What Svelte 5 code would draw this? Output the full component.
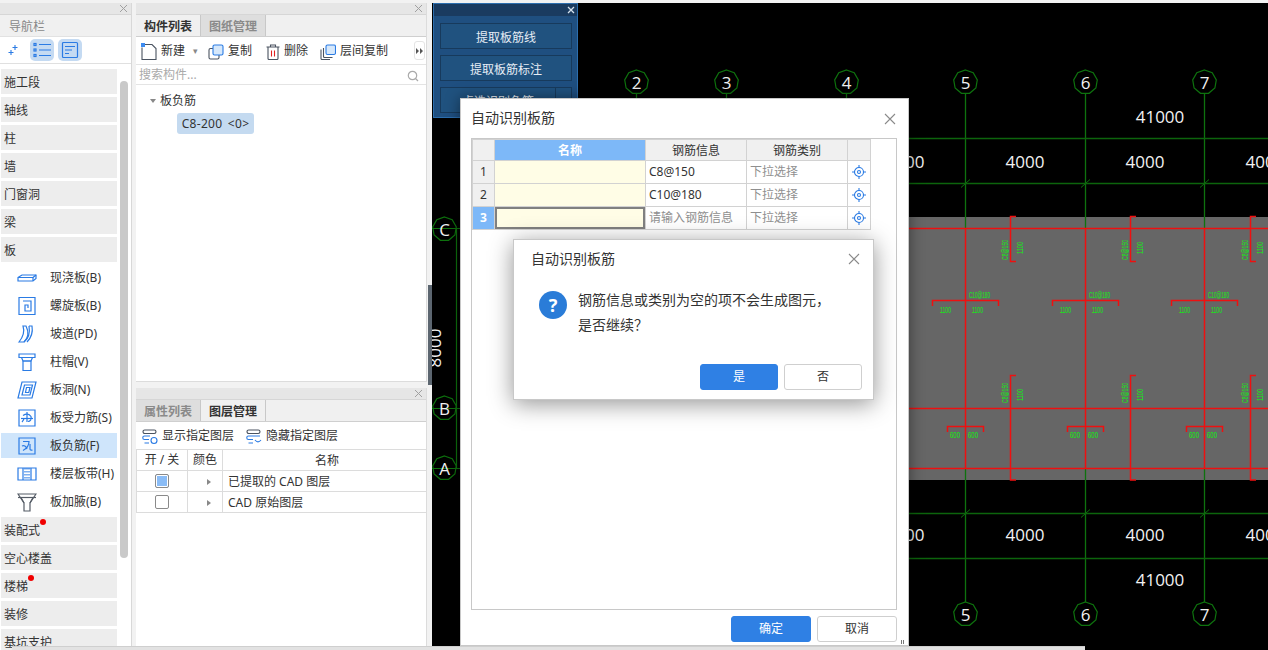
<script>
  const groupsTop = ['施工段', '轴线', '柱', '墙', '门窗洞', '梁', '板'];
  const groupsBottom = [
    { name: '装配式', dot: true },
    { name: '空心楼盖' },
    { name: '楼梯', dot: true },
    { name: '装修' },
    { name: '基坑支护' }
  ];
  const children = [
    { name: '现浇板(B)', paths: ['M1 9.500 5 7h14v3.500l-3 2.500H1z', 'M1 9.500h15v3.500', 'M16 9.500 19 7'] },
    { name: '螺旋板(B)', paths: ['M2 1.500h16v17H2z', 'M6 5h8v10H8v-6h3v3'] },
    { name: '坡道(PD)', paths: ['M2 18C6 13 8 8 6 2h3c3 6 2 12-2 16z', 'M7 18c5-4 6-10 5-16', 'M10 18c4-4 6-10 5-16h-3'] },
    { name: '柱帽(V)', paths: ['M2 2h16v3.500H2z', 'M4.500 5.500 6 9h8l1.500-3.500', 'M6 9h8v9.500H6z'] },
    { name: '板洞(N)', paths: ['M5 2h14l-4 16H1z', 'M7.500 5h8l-2.500 10H5z', 'M9.500 7.500h3.500l-1.200 5H8.500z'] },
    { name: '板受力筋(S)', paths: ['M2 2h16V18H2z', 'M4 10.500h12', 'M6 7.500c3-2 6-2 8 1 1 3-1 5-3 5', 'M10 4v10', 'M7 10c0 2-1 3-2 4'] },
    { name: '板负筋(F)', sel: true, paths: ['M2 2h16v16H2z', 'M6 5.500h6c0 4-2 7-6 9', 'M5 10c2-1 4 0 5 3', 'M13 8v5c0 1 1 1.500 2.500 1'] },
    { name: '楼层板带(H)', paths: ['M1 4h18v12H1z', 'M6 4v12M14 4v12', 'M8 4v12M10 4v12M12 4v12'], dashed: [2] },
    { name: '板加腋(B)', dark: true, paths: ['M1 2h18l-6 9v8H7v-8z', 'M1 5.500h18', 'M7 11 4 5.500M13 11l3-5.500'] }
  ];

  const topX = [636, 726, 846, 965, 1085, 1204];
  const gridX = [965, 1085, 1204];
  const subX = [1010, 1130, 1250];
  const bubbles = [
    { x: 636, y: 82, t: '2' }, { x: 726, y: 82, t: '3' }, { x: 846, y: 82, t: '4' },
    { x: 965, y: 82, t: '5' }, { x: 1085, y: 82, t: '6' }, { x: 1204, y: 82, t: '7' },
    { x: 965, y: 614, t: '5' }, { x: 1085, y: 614, t: '6' }, { x: 1204, y: 614, t: '7' },
    { x: 444, y: 229, t: 'C' }, { x: 444, y: 408, t: 'B' }, { x: 444, y: 468, t: 'A' }
  ];
  function ring(cx, cy, r = 12) {
    const pts = [];
    for (let i = 0; i < 9; i++) {
      const a = (i / 9) * Math.PI * 2 - Math.PI / 2;
      pts.push((cx + Math.cos(a) * r).toFixed(1) + ',' + (cy + Math.sin(a) * r).toFixed(1));
    }
    return pts.join(' ');
  }
  const dims = [
    { x: 905, y: 168, t: '4000' }, { x: 1025, y: 168, t: '4000' }, { x: 1145, y: 168, t: '4000' }, { x: 1265, y: 168, t: '4000' },
    { x: 905, y: 541, t: '4000' }, { x: 1025, y: 541, t: '4000' }, { x: 1145, y: 541, t: '4000' }, { x: 1265, y: 541, t: '4000' },
    { x: 1160, y: 123, t: '41000' }, { x: 1160, y: 586, t: '41000' }
  ];
</script>

<div class="app" lang="zh-CN">
  <aside class="nav">
    <div class="grip">
      <svg class="x" width="9" height="9" viewBox="0 0 9 9" stroke="#a0a0a0"><path d="M1 1 8 8M8 1 1 8" /></svg>
    </div>
    <div class="navtitle">导航栏</div>
    <div class="navtools">
      <svg class="tool" width="18" height="18" viewBox="0 0 18 18" fill="none" stroke="#2a7be4" stroke-width="1.100">
        <path d="M11 4v5M8.500 6.500h5M7 9v5M4.500 11.500h5" />
      </svg>
      <span class="chip">
        <svg width="18" height="18" viewBox="0 0 18 18" fill="none" stroke="#2a7be4" stroke-width="1.200">
          <path d="M6 3.500h12M6 9h12M6 14.500h12" /><rect x="1" y="2.500" width="2" height="2" /><rect x="1" y="8" width="2" height="2" /><rect x="1" y="13.500" width="2" height="2" />
        </svg>
      </span>
      <span class="chip">
        <svg width="18" height="18" viewBox="0 0 18 18" fill="none" stroke="#2a7be4" stroke-width="1.200">
          <rect x="1.500" y="1.500" width="15" height="15" rx="1" /><path d="M4 5.500h10M4 9h7M4 12.500h4" />
        </svg>
      </span>
    </div>
    <div class="navbody">
      <div class="navlist">
        {#each groupsTop as g}
          <div class="group">{g}</div>
        {/each}
        {#each children as c}
          <div class="kid" class:sel={c.sel}>
            <svg width="20" height="20" viewBox="0 0 20 20" fill="none" stroke={c.dark ? '#555c66' : '#2a7be4'} stroke-width="1.200">
              {#each c.paths as d, i}
                <path {d} stroke-dasharray={c.dashed && c.dashed.includes(i) ? '1.500 1.500' : undefined} />
              {/each}
            </svg>
            <span>{c.name}</span>
          </div>
        {/each}
        {#each groupsBottom as g}
          <div class="group"><span class="gname">{g.name}{#if g.dot}<i class="dot"></i>{/if}</span></div>
        {/each}
      </div>
      <div class="thumb"></div>
    </div>
  </aside>

  <div class="mid">
    <section class="panel upper">
      <div class="grip">
        <svg class="x" width="9" height="9" viewBox="0 0 9 9" stroke="#a0a0a0"><path d="M1 1 8 8M8 1 1 8" /></svg>
      </div>
      <div class="tabs">
        <span class="tab on">构件列表</span><span class="tab">图纸管理</span>
      </div>
      <div class="bar">
        <svg width="16" height="18" viewBox="0 0 16 18" fill="none" stroke="#4a5360" stroke-width="1.100">
          <path d="M1 4.500V16.500h14V5.500L11 1.500H4" /><rect x="0" y="0" width="4" height="4" fill="#3d8bf0" stroke="none" />
        </svg>
        <span class="lbl">新建</span><span class="caret">▾</span>
        <svg class="mgl" width="16" height="16" viewBox="0 0 16 16" fill="none" stroke="#4a5360" stroke-width="1.100">
          <rect x="1" y="4.500" width="10" height="10.500" rx="1.500" /><rect x="5" y="1" width="10" height="10" rx="1.500" fill="#d6e8fb" stroke="#2a7be4" />
        </svg>
        <span class="lbl">复制</span>
        <svg class="mgl wider" width="14" height="16" viewBox="0 0 14 16" fill="none" stroke="#4a5360" stroke-width="1.100">
          <path d="M0.500 3h13M4.500 3V1h5v2M2 3v11.500a1 1 0 0 0 1 1h8a1 1 0 0 0 1-1V3" /><path d="M5.500 6.500v6M8.500 6.500v6" stroke="#e02020" />
        </svg>
        <span class="lbl">删除</span>
        <svg class="mgl" width="16" height="16" viewBox="0 0 16 16" fill="none" stroke="#4a5360" stroke-width="1.100">
          <path d="M1 5.500v9a1 1 0 0 0 1 1h8M3.500 4v8.500a1 1 0 0 0 1 1h8" /><rect x="6" y="1" width="9.500" height="9.500" rx="1.500" fill="#d6e8fb" stroke="#2a7be4" />
        </svg>
        <span class="lbl">层间复制</span>
        <span class="more">
          <svg width="7" height="6" viewBox="0 0 7 6" fill="#555"><path d="M0 0 3 3 0 6zM4 0 7 3 4 6z" /></svg>
        </span>
      </div>
      <div class="search">
        <span>搜索构件...</span>
        <svg width="12" height="12" viewBox="0 0 12 12" fill="none" stroke="#aaa" stroke-width="1.200">
          <circle cx="5.500" cy="5.500" r="4.200" /><path d="M8.500 8.500 11 11" />
        </svg>
      </div>
      <div class="tree">
        <div class="node"><span class="down"></span>板负筋</div>
        <div class="leaf">C8-200 &lt;0&gt;</div>
      </div>
    </section>

    <section class="panel lowerp">
      <div class="grip">
        <svg class="x" width="9" height="9" viewBox="0 0 9 9" stroke="#a0a0a0"><path d="M1 1 8 8M8 1 1 8" /></svg>
      </div>
      <div class="tabs">
        <span class="tab">属性列表</span><span class="tab on">图层管理</span>
      </div>
      <div class="bar layerbar">
        <svg width="16" height="16" viewBox="0 0 16 16" fill="none" stroke="#2a7be4" stroke-width="1.100">
          <rect x="1" y="1" width="13" height="3.500" rx="1.700" stroke="#4a5360" /><path d="M8 7H2.500a1.700 1.700 0 0 0 0 3.500H7M7 14H2.500" /><circle cx="12" cy="11.500" r="3" />
        </svg>
        <span class="lbl">显示指定图层</span>
        <svg class="mgl" width="16" height="16" viewBox="0 0 16 16" fill="none" stroke="#2a7be4" stroke-width="1.100">
          <rect x="1" y="1" width="13" height="3.500" rx="1.700" stroke="#4a5360" /><path d="M14 7H2.500a1.700 1.700 0 0 0 0 3.500H7M7 14H2.500M9 11c2 2.500 4 2.500 6 0" />
        </svg>
        <span class="lbl">隐藏指定图层</span>
      </div>
      <table class="layers">
        <thead>
          <tr><th class="c1">开 / 关</th><th class="c2">颜色</th><th>名称</th></tr>
        </thead>
        <tbody>
          <tr>
            <td class="c1"><span class="check on"></span></td>
            <td class="c2"><span class="right"></span></td>
            <td>已提取的 CAD 图层</td>
          </tr>
          <tr>
            <td class="c1"><span class="check"></span></td>
            <td class="c2"><span class="right"></span></td>
            <td>CAD 原始图层</td>
          </tr>
        </tbody>
      </table>
    </section>
  </div>

  <div class="canvas">
    <svg width="836" height="647" viewBox="432 3 836 647">
      <rect x="908" y="217" width="360" height="263" fill="#666" />

      {#each topX as x}
        <line x1={x + 0.5} y1="94" x2={x + 0.5} y2="229" stroke="#0e720e" stroke-width="1.300" />
      {/each}
      {#each gridX as x}
        <line x1={x + 0.5} y1="229" x2={x + 0.5} y2="468" stroke="#ee1010" stroke-width="1.500" />
        <line x1={x + 0.5} y1="468" x2={x + 0.5} y2="602" stroke="#0e720e" stroke-width="1.300" />
        <path d="M{x - 4} 187.500 {x + 5} 179.500M{x - 4} 517.500 {x + 5} 509.500" stroke="#0e720e" />
      {/each}
      <path d="M908 138.500H1268M908 183.500H1268M908 513.500H1268M908 558.500H1268" stroke="#0c640c" stroke-width="1.500" />
      <path d="M908 228.500H1268M908 408.500H1268M908 468.500H1268" stroke="#ee1010" stroke-width="1.500" />
      <path d="M456.500 229V468M432 228.500H460M432 408.500H460M432 468.500H460" stroke="#0e720e" stroke-width="1.200" />

      {#each subX as x}
        <path d="M{x + 6} 216.500H{x + 0.5}V261.500H{x + 6}M{x + 6} 375.500H{x + 0.5}V480H{x + 6}" fill="none" stroke="#ee1010" stroke-width="1.500" />
        <text class="mini" transform="translate({x - 2} 250) rotate(-90)" text-anchor="middle" textLength="20" lengthAdjust="spacingAndGlyphs">C8@150</text>
        <text class="mini" transform="translate({x + 13} 248) rotate(-90)" text-anchor="middle" textLength="12" lengthAdjust="spacingAndGlyphs">1100</text>
        <text class="mini" transform="translate({x - 2} 393) rotate(-90)" text-anchor="middle" textLength="20" lengthAdjust="spacingAndGlyphs">C8@150</text>
        <text class="mini" transform="translate({x + 13} 395) rotate(-90)" text-anchor="middle" textLength="12" lengthAdjust="spacingAndGlyphs">1100</text>
      {/each}

      {#each gridX as x}
        <path d="M{x - 32.500} 306V300.500H{x + 33.500}V306M{x - 17.500} 432V426.500H{x + 18.500}V432" fill="none" stroke="#ee1010" stroke-width="1.500" />
        <text class="mini" x={x + 4} y="298" textLength="21" lengthAdjust="spacingAndGlyphs">C10@180</text>
        <text class="mini" x={x - 25} y="313" textLength="11" lengthAdjust="spacingAndGlyphs">1100</text>
        <text class="mini" x={x + 7} y="313" textLength="11" lengthAdjust="spacingAndGlyphs">1100</text>
        <text class="mini" x={x - 15} y="438" textLength="10" lengthAdjust="spacingAndGlyphs">600</text>
        <text class="mini" x={x + 3} y="438" textLength="10" lengthAdjust="spacingAndGlyphs">600</text>
      {/each}

      {#each bubbles as b}
        <polygon points={ring(b.x + 0.5, b.y)} fill="none" stroke="#0e720e" stroke-width="1.200" />
        <text class="cad" x={b.x + 0.5} y={b.y + 7} text-anchor="middle">{b.t}</text>
      {/each}
      {#each dims as d}
        <text class="cad" x={d.x} y={d.y} text-anchor="middle">{d.t}</text>
      {/each}
      <text class="cad" transform="translate(441 348) rotate(-90)" text-anchor="middle">8000</text>
    </svg>
  </div>

  <div class="handle"></div>

  <div class="float">
    <div class="floathead">
      <svg width="8" height="8" viewBox="0 0 8 8" stroke="#d5e2ef" stroke-width="1.300"><path d="M1 1 7 7M7 1 1 7" /></svg>
    </div>
    <div class="fbtn">提取板筋线</div>
    <div class="fbtn">提取板筋标注</div>
    <div class="fbtn split"><span>点选识别负筋</span><b>▾</b></div>
  </div>

  <div class="dialog main">
    <header>
      <span>自动识别板筋</span>
      <svg width="12" height="12" viewBox="0 0 12 12" stroke="#8a8a8a" stroke-width="1.100"><path d="M1 1 11 11M11 1 1 11" /></svg>
    </header>
    <div class="box">
      <table class="rebar">
        <thead>
          <tr><th class="rh"></th><th class="active name">名称</th><th class="info">钢筋信息</th><th class="type">钢筋类别</th><th class="loc"></th></tr>
        </thead>
        <tbody>
          {#each [['1', 'C8@150'], ['2', 'C10@180'], ['3', '']] as row, i}
            <tr>
              <td class="rh" class:active={i === 2}>{row[0]}</td>
              <td class="name" class:cur={i === 2}></td>
              <td class:ph={!row[1]}>{row[1] || '请输入钢筋信息'}</td>
              <td class="ph">下拉选择</td>
              <td class="loc">
                <svg width="14" height="14" viewBox="0 0 14 14" fill="none" stroke="#2a7be4" stroke-width="1.100">
                  <circle cx="7" cy="7" r="4.500" /><circle cx="7" cy="7" r="1.500" /><path d="M7 0v2.500M7 11.500V14M0 7h2.500M11.500 7H14" />
                </svg>
              </td>
            </tr>
          {/each}
        </tbody>
      </table>
    </div>
    <footer>
      <button class="btn primary wide">确定</button>
      <button class="btn wide">取消</button>
    </footer>
    <i class="corner"></i>
  </div>

  <div class="dialog ask">
    <header>
      <span>自动识别板筋</span>
      <svg width="12" height="12" viewBox="0 0 12 12" stroke="#8a8a8a" stroke-width="1.100"><path d="M1 1 11 11M11 1 1 11" /></svg>
    </header>
    <div class="askbody">
      <span class="q">?</span>
      <p>钢筋信息或类别为空的项不会生成图元，<br />是否继续？</p>
    </div>
    <footer>
      <button class="btn primary">是</button>
      <button class="btn">否</button>
    </footer>
  </div>

  <div class="hscroll"></div>
</div>

<style>
  :global(body) { margin: 0; background: #f0f0f0; }

  .app {
    position: relative;
    display: flex;
    width: 1268px;
    height: 650px;
    padding-top: 3px;
    box-sizing: border-box;
    overflow: hidden;
    background: #f2f2f2;
    font: 12px/1.2 "Noto Sans", "Noto Sans CJK SC", sans-serif;
    color: #333;
  }

  .grip {
    height: 11px;
    background: #e6e6e6;
    border-bottom: 1px solid #d6d6d6;
    position: relative;
  }
  .x { position: absolute; right: 3px; top: 1px; }

  /* nav */
  .nav {
    width: 132px;
    margin-right: 4px;
    background: #fff;
    border-right: 1px solid #d8d8d8;
    box-sizing: border-box;
    display: flex;
    flex-direction: column;
  }
  .navtitle {
    height: 22px;
    line-height: 24px;
    padding-left: 9px;
    background: #f0f0f0;
    color: #888;
    border-bottom: 1px solid #e2e2e2;
    box-sizing: border-box;
  }
  .navtools {
    height: 27px;
    display: flex;
    align-items: center;
    gap: 4px;
    padding-left: 4px;
    border-bottom: 1px solid #e0e0e0;
    box-sizing: border-box;
  }
  .tool { margin-right: 4px; }
  .chip {
    width: 24px;
    height: 22px;
    background: #c4daf2;
    border-radius: 5px;
    display: flex;
    align-items: center;
    justify-content: center;
  }
  .navbody {
    flex: 1;
    position: relative;
    overflow: hidden;
    padding-top: 5px;
  }
  .navlist { width: 116px; margin-left: 1px; }
  .group {
    height: 25px;
    line-height: 27px;
    margin-bottom: 3px;
    padding-left: 3px;
    background: #ededed;
    overflow: hidden;
  }
  .gname { position: relative; display: inline-block; height: 25px; vertical-align: top; }
  .kid {
    height: 25px;
    margin-bottom: 3px;
    display: flex;
    align-items: center;
    gap: 13px;
    padding-left: 16px;
    white-space: nowrap;
    box-sizing: border-box;
  }
  .kid span { padding-top: 2px; }
  .kid.sel { background: #cfe5fb; }
  .dot {
    position: absolute;
    left: 100%;
    top: 2px;
    width: 6px;
    height: 6px;
    border-radius: 50%;
    background: #f00000;
  }
  .group:has(.dot) { overflow: visible; }
  .thumb {
    position: absolute;
    left: 120px;
    top: 17px;
    width: 8px;
    height: 477px;
    border-radius: 4px;
    background: #c9c9c9;
  }

  /* middle panels */
  .mid {
    width: 291px;
    margin-right: 5px;
    display: flex;
    flex-direction: column;
    gap: 6px;
  }
  .panel {
    background: #fff;
    border-right: 1px solid #dcdcdc;
    box-sizing: border-box;
  }
  .upper { height: 379px; border-bottom: 1px solid #dcdcdc; }
  .lowerp { flex: 1; }
  .tabs {
    height: 22px;
    display: flex;
    background: #f0f0f0;
    border-bottom: 1px solid #cfcfcf;
    box-sizing: border-box;
  }
  .tab {
    width: 65px;
    line-height: 24px;
    text-align: center;
    font-weight: 700;
    color: #8a8a8a;
    background: #dedede;
    border-right: 1px solid #c8c8c8;
    box-sizing: border-box;
  }
  .tab.on { color: #333; background: #f0f0f0; }
  .bar {
    position: relative;
    display: flex;
    align-items: center;
    padding: 2px 0 0 5px;
    border-bottom: 1px solid #e4e4e4;
    box-sizing: border-box;
    height: 28px;
    white-space: nowrap;
  }
  .lbl { margin-left: 4px; }
  .caret { margin: 0 -2px 0 8px; font-size: 9px; color: #888; }
  .mgl { margin-left: 12px; }
  .wider { margin-left: 14px; }
  .more {
    position: absolute;
    right: 1px;
    top: 4px;
    width: 11px;
    height: 19px;
    display: flex;
    align-items: center;
    justify-content: center;
    border: 1px solid #e4e4e4;
    border-radius: 3px;
    box-sizing: border-box;
  }
  .search {
    height: 20px;
    display: flex;
    align-items: center;
    justify-content: space-between;
    padding: 2px 7px 0 3px;
    color: #aaa;
    border-bottom: 1px solid #e4e4e4;
    box-sizing: border-box;
  }
  .tree { padding-top: 6px; }
  .node {
    display: flex;
    align-items: center;
    gap: 4px;
    padding-left: 14px;
    height: 20px;
  }
  .down {
    width: 0;
    height: 0;
    border: 3px solid transparent;
    border-top: 4px solid #888;
    border-bottom: 0;
  }
  .leaf {
    width: 77px;
    height: 21px;
    line-height: 21px;
    margin: 2px 0 0 41px;
    text-align: center;
    background: #c4daf0;
    border-radius: 3px;
    white-space: nowrap;
    letter-spacing: 0.3px;
    word-spacing: 2px;
  }
  .layerbar { padding-left: 6px; border-bottom: 0; height: 27px; }
  table { border-collapse: collapse; table-layout: fixed; }
  .layers { width: 291px; }
  .layers th, .layers td {
    border: 1px solid #dcdcdc;
    height: 21px;
    padding: 2px 0 0 5px;
    font-weight: 400;
    font-size: 12px;
    box-sizing: border-box;
  }
  .layers th { text-align: center; }
  .layers .c1 { width: 51px; text-align: center; padding: 0; }
  .layers .c2 { width: 35px; text-align: center; padding: 0; }
  .check {
    display: inline-block;
    width: 14px;
    height: 14px;
    vertical-align: middle;
    border: 1px solid #8a8a8a;
    border-radius: 2px;
    background: #fff;
    box-sizing: border-box;
  }
  .check.on { background: #8abcf6; box-shadow: inset 0 0 0 1px #fff; }
  .right {
    display: inline-block;
    margin-left: 7px;
    width: 0;
    height: 0;
    vertical-align: middle;
    border: 3px solid transparent;
    border-left: 4px solid #888;
    border-right: 0;
  }

  /* cad canvas */
  .canvas { flex: 1; background: #000; }
  .canvas svg { display: block; }
  .cad { font: 17px "Open Sans", sans-serif; fill: #f2f2f2; }
  .mini { font: 9px "Liberation Sans", sans-serif; fill: #10ee10; }
  .handle {
    position: absolute;
    left: 428px;
    top: 285px;
    width: 4px;
    height: 100px;
    background: #5c6670;
  }

  .float {
    position: absolute;
    left: 433px;
    top: 3px;
    width: 145px;
    height: 115px;
    padding: 0 5px 0 6px;
    box-sizing: border-box;
    background: #1f4f80;
    border: 1px solid #2c6eae;
  }
  .floathead {
    height: 12px;
    margin: 0 -5px 7px -6px;
    background: #1a3b60;
    display: flex;
    align-items: center;
    justify-content: flex-end;
    padding-right: 2px;
  }
  .fbtn {
    height: 26px;
    line-height: 27px;
    margin-bottom: 6px;
    text-align: center;
    color: #e6edf5;
    background: #20527f;
    border: 1px solid #173a5c;
    box-sizing: border-box;
  }
  .split { display: flex; }
  .split span { flex: 1; }
  .split b { width: 15px; border-left: 1px solid #173a5c; font-size: 9px; font-weight: 400; }

  /* dialogs */
  .dialog {
    position: absolute;
    background: #fff;
    border: 1px solid #c8c8c8;
    box-sizing: border-box;
    display: flex;
    flex-direction: column;
  }
  .dialog header {
    display: flex;
    align-items: center;
    justify-content: space-between;
    font-size: 14px;
  }
  .main {
    left: 460px;
    top: 98px;
    width: 449px;
    height: 548px;
    padding: 0 11px 0 10px;
    box-shadow: 0 0 14px rgba(0, 0, 0, 0.45);
  }
  .main header { height: 39px; box-sizing: border-box; }
  .main header svg { margin-right: 1px; }
  .box {
    flex: 1;
    border: 1px solid #c8c8c8;
    box-sizing: border-box;
  }
  .rebar { width: 398px; }
  .rebar th, .rebar td {
    border: 1px solid #d2d2d2;
    height: 23px;
    padding: 1px 0 0 3px;
    font-size: 12px;
    font-weight: 400;
    box-sizing: border-box;
  }
  .rebar th { height: 21px; padding: 2px 0 0; background: #f0f0f0; text-align: center; }
  .rebar .rh { width: 22px; background: #f0f0f0; text-align: center; padding: 0; }
  .rebar .name { width: 151px; background: #fffde6; }
  .rebar th.name { background: #7db8f8; }
  .rebar .info { width: 101px; }
  .rebar .type { width: 101px; }
  .rebar .loc { width: 23px; padding: 0; text-align: center; line-height: 0; }
  .rebar .active { background: #7db8f8; color: #fff; font-weight: 700; }
  .rebar .cur { box-shadow: inset 0 0 0 2px #808080; }
  .ph { color: #8f8f8f; }

  footer { display: flex; justify-content: flex-end; gap: 6px; }
  .main footer { height: 35px; align-items: flex-end; padding-bottom: 3px; box-sizing: border-box; }
  .btn {
    width: 78px;
    height: 26px;
    padding: 0;
    font: inherit;
    color: #333;
    background: #fff;
    border: 1px solid #cfcfcf;
    border-radius: 3px;
  }
  .wide { width: 80px; }
  .primary { background: #2f80e4; border-color: #2f80e4; color: #fff; }
  .corner {
    position: absolute;
    right: 3px;
    bottom: 1px;
    width: 4px;
    height: 4px;
    background: repeating-linear-gradient(90deg, #777 0 1px, transparent 1px 2px);
  }

  .ask {
    left: 513px;
    top: 239px;
    width: 361px;
    height: 161px;
    padding: 0 11px 0 17px;
    box-shadow: 0 4px 22px rgba(0, 0, 0, 0.42);
  }
  .ask header { height: 38px; padding-right: 2px; }
  .askbody {
    flex: 1;
    display: flex;
    align-items: flex-start;
    gap: 11px;
    padding: 13px 0 0 8px;
  }
  .q {
    width: 28px;
    height: 28px;
    flex: none;
    border-radius: 50%;
    background: #2a7cd8;
    color: #fff;
    font-size: 18px;
    font-weight: 700;
    line-height: 28px;
    text-align: center;
  }
  .askbody p {
    margin: -4px 0 0;
    font-size: 14px;
    line-height: 25px;
    white-space: nowrap;
  }
  .ask footer { padding-bottom: 9px; }

  .hscroll {
    position: absolute;
    left: 12px;
    bottom: 0;
    width: 1073px;
    height: 4px;
    background: #e2e2e2;
    border-top: 1px solid #cfcfcf;
    box-sizing: border-box;
  }
</style>
